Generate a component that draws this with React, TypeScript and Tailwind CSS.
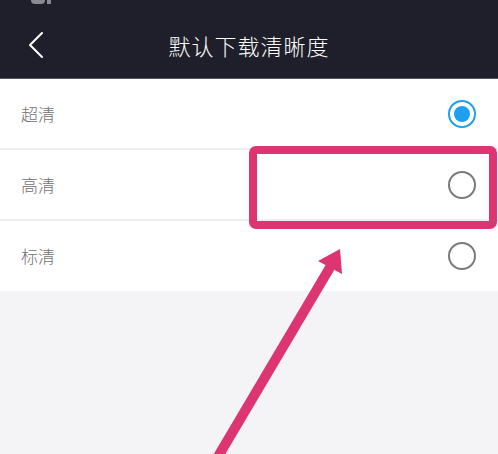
const FONT = { fontFamily: '"Noto Sans CJK SC", "Noto Sans", sans-serif' }

const OPTIONS = [
  { label: '超清', checked: true },
  { label: '高清', checked: false },
  { label: '标清', checked: false },
]

function Radio({ checked }: { checked: boolean }) {
  if (checked) {
    return (
      <span className="flex h-[28px] w-[28px] items-center justify-center rounded-full border-2 border-[#1e9ff0] bg-white">
        <span className="h-[16px] w-[16px] rounded-full bg-[#1e9ff0]" />
      </span>
    )
  }
  return <span className="h-[28px] w-[28px] rounded-full border-2 border-[#7a7a7a] bg-white" />
}

export default function App() {
  return (
    <div className="relative h-[454px] w-[498px] overflow-hidden bg-[#f4f3f6]" style={FONT}>
      {/* 顶部导航 */}
      <div className="relative h-[79px] border-b border-[#55565e] bg-[#1e1f2a]">
        <div className="absolute left-[31px] top-0 flex gap-[2px]">
          <span className="h-[4px] w-[14px] rounded-b-sm bg-[#8a8b92]" />
          <span className="h-[4px] w-[4px] bg-[#8a8b92]" />
        </div>
        <div className="grid h-full grid-cols-[70px_1fr_70px] items-center pt-[11px]">
          <svg className="ml-[28px]" width="16" height="28" viewBox="0 0 16 28" fill="none">
            <polyline points="14,2 2,14 14,26" stroke="white" strokeWidth="2" strokeLinecap="round" strokeLinejoin="round" />
          </svg>
          <h1 className="text-center text-[22px] font-light leading-none tracking-[1px] text-white">默认下载清晰度</h1>
          <span />
        </div>
      </div>

      {/* 清晰度选项 */}
      <ul className="bg-white">
        {OPTIONS.map((o, i) => (
          <li
            key={o.label}
            className={`flex items-center justify-between pl-[21px] pr-[22px] ${i < OPTIONS.length - 1 ? 'h-[71px] border-b-2 border-[#eeeeee]' : 'h-[70px]'}`}
          >
            <span className="text-[17px] font-light text-[#707070]">{o.label}</span>
            <Radio checked={o.checked} />
          </li>
        ))}
      </ul>

      {/* 标注框和箭头 */}
      <svg className="pointer-events-none absolute left-0 top-0" width="498" height="454" viewBox="0 0 498 454">
        <rect x="253" y="150" width="240" height="75" rx="3" fill="none" stroke="#dc3571" strokeWidth="8" />
        <line x1="216" y1="460" x2="332" y2="264" stroke="#dc3571" strokeWidth="10" />
        <polygon points="340,249 318,261 342,274" fill="#dc3571" />
      </svg>
    </div>
  )
}
